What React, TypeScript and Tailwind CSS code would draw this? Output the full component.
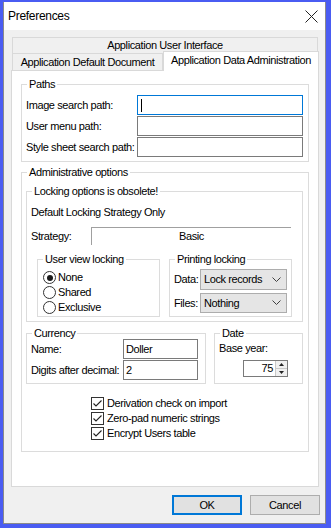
import React from "react";

const font = { fontFamily: '"Liberation Sans", Arial, sans-serif' };

function Group({
  label,
  className,
  children,
}: {
  label: string;
  className: string;
  children?: React.ReactNode;
}) {
  return (
    <div className={"relative border border-[#dcdcdc] " + className}>
      <span className="absolute left-[5px] top-[-7px] bg-white px-[2px] leading-[13px] whitespace-nowrap">
        {label}
      </span>
      {children}
    </div>
  );
}

function Edit({ className, value, focused }: { className: string; value?: string; focused?: boolean }) {
  return (
    <div
      className={
        "flex items-center bg-white border px-[2px] leading-[13px] " +
        (focused ? "border-[#0078d7] " : "border-[#7a7a7a] ") +
        className
      }
    >
      {focused && <span className="block w-px h-[13px] bg-black ml-[1px]" />}
      {value}
    </div>
  );
}

function Combo({ value, className }: { value: string; className: string }) {
  return (
    <div
      className={
        "flex items-center justify-between bg-[#e5e5e5] border border-[#adadad] pl-[3px] pr-[5px] leading-[13px] whitespace-nowrap " +
        className
      }
    >
      <span>{value}</span>
      <svg width="9" height="6" viewBox="0 0 9 6">
        <path d="M0.5 0.5 L4.5 4.5 L8.5 0.5" fill="none" stroke="#404040" strokeWidth="1" />
      </svg>
    </div>
  );
}

function Radio({ label, checked }: { label: string; checked?: boolean }) {
  return (
    <div className="flex items-center h-[15px]">
      <span className="relative w-[13px] h-[13px] rounded-full border border-[#333] bg-white flex items-center justify-center">
        {checked && <span className="block w-[6px] h-[6px] rounded-full bg-[#1a1a1a]" />}
      </span>
      <span className="ml-[2px] leading-[13px]">{label}</span>
    </div>
  );
}

function Check({ label }: { label: string }) {
  return (
    <div className="flex items-center h-[15px]">
      <span className="w-[13px] h-[13px] border border-[#333] bg-white flex items-center justify-center">
        <svg width="11" height="11" viewBox="0 0 11 11">
          <path d="M1.5 5.5 L4 8 L9.5 2.5" fill="none" stroke="#222" strokeWidth="1.1" />
        </svg>
      </span>
      <span className="ml-[3px] leading-[13px] whitespace-nowrap">{label}</span>
    </div>
  );
}

export default function App() {
  return (
    <div
      className="w-[331px] h-[528px] bg-[#4a5cf2] pt-[2px] pl-[3px] text-[11px] tracking-[-0.4px] text-black overflow-hidden"
      style={font}
    >
      <div className="w-[323px] h-[522px] border-l border-r border-b border-[#8a8a8a] bg-[#f0f0f0] flex flex-col">
        {/* Title bar */}
        <div className="h-[28px] bg-white flex items-center justify-between pl-[4px] pr-[7px]">
          <span className="text-[12px] tracking-[-0.3px]">Preferences</span>
          <svg width="13" height="13" viewBox="0 0 13 13">
            <path d="M0.5 0.5 L12.5 12.5 M12.5 0.5 L0.5 12.5" stroke="#222" strokeWidth="1" />
          </svg>
        </div>

        {/* Client */}
        <div className="flex-1 pl-[7px] pt-[7px] flex flex-col whitespace-nowrap">
          {/* Tab rows */}
          <div className="ml-[1px] w-[306px] h-[16px] border border-b-0 border-[#d9d9d9] flex items-center justify-center leading-[13px]">
            Application User Interface
          </div>
          <div className="flex h-[17px] relative z-10">
            <div className="ml-[1px] w-[151px] h-[17px] border border-b-0 border-[#d9d9d9] flex items-center justify-center leading-[13px]">
              Application Default Document
            </div>
            <div className="w-[156px] h-[20px] -mt-[2px] border border-b-0 border-[#d9d9d9] bg-white flex items-center justify-center leading-[13px] pb-[2px]">
              Application Data Administration
            </div>
          </div>
          {/* Panel */}
          <div className="w-[308px] h-[417px] bg-white border border-[#d9d9d9] pl-[9px] pt-[13px] flex flex-col">
            <Group label="Paths" className="w-[288px] h-[78px] pl-[4px] pt-[10px] flex flex-col gap-[1px]">
              <div className="flex items-center h-[20px]">
                <span className="w-[111px]">Image search path:</span>
                <Edit className="w-[166px] h-[20px]" focused />
              </div>
              <div className="flex items-center h-[20px]">
                <span className="w-[111px]">User menu path:</span>
                <Edit className="w-[166px] h-[20px]" />
              </div>
              <div className="flex items-center h-[20px]">
                <span className="w-[111px]">Style sheet search path:</span>
                <Edit className="w-[166px] h-[20px]" />
              </div>
            </Group>

            <Group label="Administrative options" className="mt-[10px] w-[288px] h-[280px] pl-[4px] pt-[18px] flex flex-col">
              <Group label="Locking options is obsolete!" className="w-[277px] h-[131px] pl-[4px] pt-[14px] flex flex-col">
                <div className="leading-[13px]">Default Locking Strategy Only</div>
                <div className="flex items-center mt-[8px] h-[18px]">
                  <span className="w-[60px] leading-[13px]">Strategy:</span>
                  <div className="w-[200px] h-[18px] border-t border-l border-[#a0a0a0] flex items-center justify-center leading-[13px]">
                    Basic
                  </div>
                </div>
                <div className="flex mt-[14px] ml-[6px] gap-[9px]">
                  <Group label="User view locking" className="w-[123px] h-[58px] pl-[5px] pt-[10px] flex flex-col">
                    <Radio label="None" checked />
                    <Radio label="Shared" />
                    <Radio label="Exclusive" />
                  </Group>
                  <Group label="Printing locking" className="w-[123px] h-[58px] pl-[4px] pt-[9px] flex flex-col gap-[3px]">
                    <div className="flex items-center h-[21px]">
                      <span className="w-[26px]">Data:</span>
                      <Combo value="Lock records" className="w-[87px] h-[21px]" />
                    </div>
                    <div className="flex items-center h-[20px]">
                      <span className="w-[26px]">Files:</span>
                      <Combo value="Nothing" className="w-[87px] h-[20px]" />
                    </div>
                  </Group>
                </div>
              </Group>

              <div className="flex mt-[11px] gap-[8px]">
                <Group label="Currency" className="w-[180px] h-[51px] pl-[4px] pt-[5px] flex flex-col gap-[1px]">
                  <div className="flex items-center h-[20px]">
                    <span className="w-[92px]">Name:</span>
                    <Edit className="w-[75px] h-[20px]" value="Doller" />
                  </div>
                  <div className="flex items-center h-[20px]">
                    <span className="w-[92px]">Digits after decimal:</span>
                    <Edit className="w-[75px] h-[20px]" value="2" />
                  </div>
                </Group>
                <Group label="Date" className="w-[89px] h-[51px] pl-[4px] pt-[8px] flex flex-col">
                  <span className="leading-[13px]">Base year:</span>
                  <div className="ml-[24px] mt-[5px] w-[45px] h-[17px] border border-[#7a7a7a] bg-white flex">
                    <span className="flex-1 text-right pr-[2px] leading-[15px]">75</span>
                    <div className="w-[12px] flex flex-col border-l border-[#c8c8c8] bg-[#f0f0f0]">
                      <div className="flex-1 flex items-center justify-center border-b border-[#c8c8c8]">
                        <svg width="5" height="3" viewBox="0 0 5 3">
                          <path d="M0 3 L2.5 0 L5 3 Z" fill="#222" />
                        </svg>
                      </div>
                      <div className="flex-1 flex items-center justify-center">
                        <svg width="5" height="3" viewBox="0 0 5 3">
                          <path d="M0 0 L2.5 3 L5 0 Z" fill="#222" />
                        </svg>
                      </div>
                    </div>
                  </div>
                </Group>
              </div>

              <div className="ml-[65px] mt-[12px] flex flex-col">
                <Check label="Derivation check on import" />
                <Check label="Zero-pad numeric strings" />
                <Check label="Encrypt Users table" />
              </div>
            </Group>
          </div>

          {/* Buttons */}
          <div className="flex justify-end gap-[8px] mt-[8px] pr-[5px]">
            <div className="w-[70px] h-[20px] bg-[#e1e1e1] border-2 border-[#0078d7] flex items-center justify-center leading-[13px]">
              OK
            </div>
            <div className="w-[70px] h-[20px] bg-[#e1e1e1] border border-[#adadad] flex items-center justify-center leading-[13px]">
              Cancel
            </div>
          </div>
        </div>
      </div>
    </div>
  );
}
